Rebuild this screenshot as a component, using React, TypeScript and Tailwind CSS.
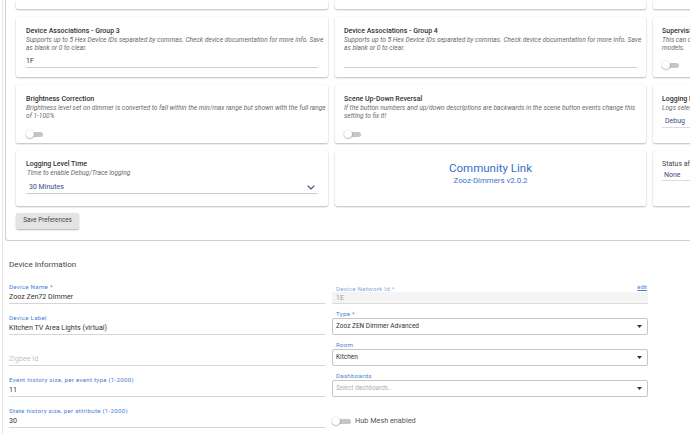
import React from "react";

const font = { fontFamily: "Roboto, 'Open Sans', Arial, sans-serif" };

function Toggle({ wide }: { wide?: boolean }) {
  return (
    <div className={`relative h-[8px] flex items-center ${wide ? "w-[19px]" : "w-[17px]"}`}>
      <div className={`ml-[2px] h-[5px] rounded-full bg-[#c6c6c6] ${wide ? "w-[17px]" : "w-[15px]"}`} />
      <div className="absolute left-0 top-0 h-[8px] w-[8px] rounded-full bg-white shadow-[0_0.5px_1.5px_rgba(0,0,0,0.45)]" />
    </div>
  );
}

function Chevron() {
  return (
    <svg width="8" height="5" viewBox="0 0 8 5" className="block">
      <polyline points="0.6,0.6 4,4 7.4,0.6" fill="none" stroke="#3c4b7e" strokeWidth="1.1" />
    </svg>
  );
}

function Tri() {
  return (
    <svg width="5" height="3" viewBox="0 0 5 3" className="block">
      <polygon points="0,0 5,0 2.5,3" fill="#333" />
    </svg>
  );
}

const card = "bg-white rounded-[2px] shadow-[0_1px_2px_rgba(0,0,0,0.26),0_0_2px_rgba(0,0,0,0.06)] overflow-hidden";
const title = "text-[7px] leading-[9px] font-medium text-[#333] whitespace-nowrap";
const desc = "text-[6.6px] leading-[8px] italic text-[#6a6a6a] whitespace-nowrap";
const label = "text-[6.2px] tracking-[0.25px] leading-[8px] whitespace-nowrap";

function Field({ name, value, placeholder }: { name?: string; value?: string; placeholder?: string }) {
  return (
    <div className="flex flex-col">
      <div className={`h-[8px] ${label} text-[#4a7fd6]`}>{name}</div>
      <div className="h-[13px] border-b border-[#d6d6d6] text-[7.1px] leading-[12px] whitespace-nowrap">
        {value ? <span className="text-[#333]">{value}</span> : <span className="text-[#c4c4c4]">{placeholder}</span>}
      </div>
    </div>
  );
}

function SelectBox({ name, value, placeholder }: { name: string; value?: string; placeholder?: string }) {
  return (
    <div className="flex flex-col">
      <div className={`h-[8px] pl-[4px] ${label} text-[#4a7fd6]`}>{name}</div>
      <div className="h-[17px] border border-[#c6c6c6] rounded-[2px] flex items-center justify-between pl-[3px] pr-[5px]">
        {value ? (
          <span className="text-[6.5px] text-[#333] whitespace-nowrap">{value}</span>
        ) : (
          <span className="text-[6.5px] italic text-[#b0b0b0] whitespace-nowrap">{placeholder}</span>
        )}
        <Tri />
      </div>
    </div>
  );
}

export default function App() {
  return (
    <div className="w-[690px] h-[434px] overflow-hidden bg-white" style={font}>
      <div className="ml-[2px] w-[780px] h-[434px] border-l border-[#e6e6e6]">
        {/* Preferences panel */}
        <div className="ml-[2px] border-l border-b border-[#cfcfcf] rounded-bl-[3px] pl-[10px] pb-[11px]">
          <div className="grid grid-cols-[312px_311px_311px] grid-rows-[9px_60px_58px_55px] gap-x-[7px] gap-y-[8px]">
            {/* row 1 (cut) */}
            <div className={card} />
            <div className={card} />
            <div className={card} />

            {/* row 2 */}
            <div className={`${card} pt-[10px] px-[10px]`}>
              <div className={title}>Device Associations - Group 3</div>
              <div className={desc}>Supports up to 5 Hex Device IDs separated by commas. Check device documentation for more info. Save</div>
              <div className={desc}>as blank or 0 to clear.</div>
              <div className="mt-[3px] h-[13px] border-b border-[#cfcfcf] text-[7px] leading-[12px] text-[#333]">1F</div>
            </div>
            <div className={`${card} pt-[10px] pl-[9px] pr-[9px]`}>
              <div className={title}>Device Associations - Group 4</div>
              <div className={desc}>Supports up to 5 Hex Device IDs separated by commas. Check device documentation for more info. Save</div>
              <div className={desc}>as blank or 0 to clear.</div>
              <div className="mt-[3px] h-[13px] border-b border-[#cfcfcf]" />
            </div>
            <div className={`${card} pt-[10px] pl-[9px]`}>
              <div className={title}>Supervision Encapsulation</div>
              <div className={desc}>This can cause issues with some older devices and should only be enabled on newer</div>
              <div className={desc}>models.</div>
              <div className="mt-[9px]">
                <Toggle />
              </div>
            </div>

            {/* row 3 */}
            <div className={`${card} pt-[10px] px-[10px]`}>
              <div className={title}>Brightness Correction</div>
              <div className={desc}>Brightness level set on dimmer is converted to fall within the min/max range but shown with the full range</div>
              <div className={desc}>of 1-100%</div>
              <div className="mt-[10px]">
                <Toggle />
              </div>
            </div>
            <div className={`${card} pt-[10px] pl-[9px] pr-[9px]`}>
              <div className={title}>Scene Up-Down Reversal</div>
              <div className={desc}>If the button numbers and up/down descriptions are backwards in the scene button events change this</div>
              <div className={desc}>setting to fix it!</div>
              <div className="mt-[10px]">
                <Toggle />
              </div>
            </div>
            <div className={`${card} pt-[10px] pl-[9px]`}>
              <div className={title}>Logging Level</div>
              <div className={desc}>Logs selected will be enabled for the time set below</div>
              <div className="mt-[3px] h-[13px] w-[200px] border-b border-[#dcdcdc] pl-[3px] text-[7px] leading-[13px] text-[#3c4b7e]">Debug</div>
            </div>

            {/* row 4 */}
            <div className={`${card} pt-[9px] px-[10px]`}>
              <div className={title}>Logging Level Time</div>
              <div className={`${desc} pl-[1px]`}>Time to enable Debug/Trace logging</div>
              <div className="mt-[4px] h-[13px] border-b border-[#cfcfcf] pl-[3px] pr-[3px] flex items-center justify-between">
                <span className="text-[7px] leading-[13px] text-[#3c4b7e]">30 Minutes</span>
                <Chevron />
              </div>
            </div>
            <div className={`${card} pt-[10px] flex flex-col items-center`}>
              <div className="text-[11.5px] leading-[14px] text-[#3470c6] whitespace-nowrap">Community Link</div>
              <div className="mt-[1px] text-[7.8px] leading-[10px] text-[#3a74c8] whitespace-nowrap">Zooz-Dimmers v2.0.2</div>
            </div>
            <div className={`${card} pt-[9px] pl-[9px]`}>
              <div className="text-[7px] leading-[9px] text-[#444] whitespace-nowrap">Status after Power Failure</div>
              <div className="h-[12px] w-[200px] border-b border-[#dcdcdc] pl-[2px] text-[7px] leading-[12px] text-[#3c4b7e]">None</div>
            </div>
          </div>
          <button className="mt-[7px] h-[16px] w-[63px] rounded-[2px] bg-[#e4e4e4] shadow-[0_1px_1.5px_rgba(0,0,0,0.3)] text-[6.3px] text-[#444] flex items-center justify-center whitespace-nowrap">
            Save Preferences
          </button>
        </div>

        {/* Device information */}
        <div className="pl-[6px]">
          <div className="pt-[19px] h-[29px] text-[8px] leading-[10px] text-[#444]">Device Information</div>
          <div className="mt-[13px] grid grid-cols-[316px_316px] gap-x-[7px]">
            <div className="flex flex-col gap-[10px]">
              <Field name="Device Name *" value="Zooz Zen72 Dimmer" />
              <Field name="Device Label" value="Kitchen TV Area Lights (virtual)" />
              <Field name="" placeholder="Zigbee Id" />
              <Field name="Event history size, per event type (1-2000)" value="11" />
              <Field name="State history size, per attribute (1-2000)" value="30" />
            </div>
            <div className="flex flex-col gap-[6px] pt-[1px]">
              <div className="flex flex-col">
                <div className="h-[8px] flex justify-between items-start">
                  <span className={`pl-[4px] ${label} leading-[10px] text-[#86a7dc]`}>Device Network Id *</span>
                  <span className="text-[5.8px] leading-[6px] text-[#4a7fd6] underline whitespace-nowrap pr-[1px]">edit</span>
                </div>
                <div className="h-[12px] bg-[#f4f4f4] border-b border-[#dcdcdc] pl-[4px] text-[7px] leading-[12px] text-[#9a9a9a]">1E</div>
              </div>
              <SelectBox name="Type *" value="Zooz ZEN Dimmer Advanced" />
              <SelectBox name="Room" value="Kitchen" />
              <SelectBox name="Dashboards" placeholder="Select dashboards..." />
              <div className="mt-[13px] flex items-center gap-[4px]">
                <Toggle wide />
                <span className="text-[7.3px] text-[#555] whitespace-nowrap">Hub Mesh enabled</span>
              </div>
            </div>
          </div>
        </div>
      </div>
    </div>
  );
}
